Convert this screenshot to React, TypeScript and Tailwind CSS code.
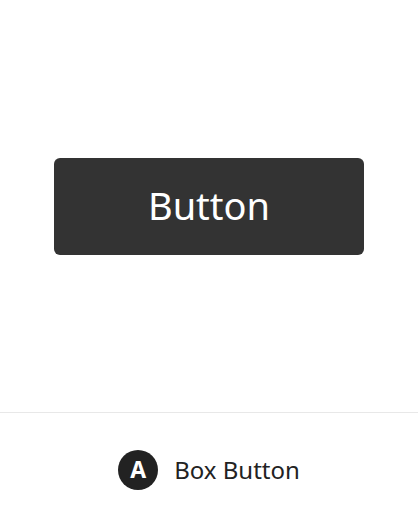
export default function App() {
  return (
    <div className="w-[418px] h-[526px] bg-white flex flex-col" style={{ fontFamily: '"Noto Sans", "Open Sans", sans-serif' }}>
      {/* Preview */}
      <div className="h-[412px] flex items-center justify-center">
        <button className="w-[310px] h-[97px] rounded-[6px] bg-[#333333] text-white text-[38px] leading-none pb-[3px] flex items-center justify-center">
          Button
        </button>
      </div>
      {/* Caption */}
      <div className="flex-1 border-t border-[#e8e8e8] flex items-center justify-center gap-4">
        <div className="w-10 h-10 rounded-full bg-[#222222] text-white flex items-center justify-center text-[23px] font-bold leading-none">
          A
        </div>
        <span className="text-[24px] text-[#222222] leading-none">Box Button</span>
      </div>
    </div>
  )
}
